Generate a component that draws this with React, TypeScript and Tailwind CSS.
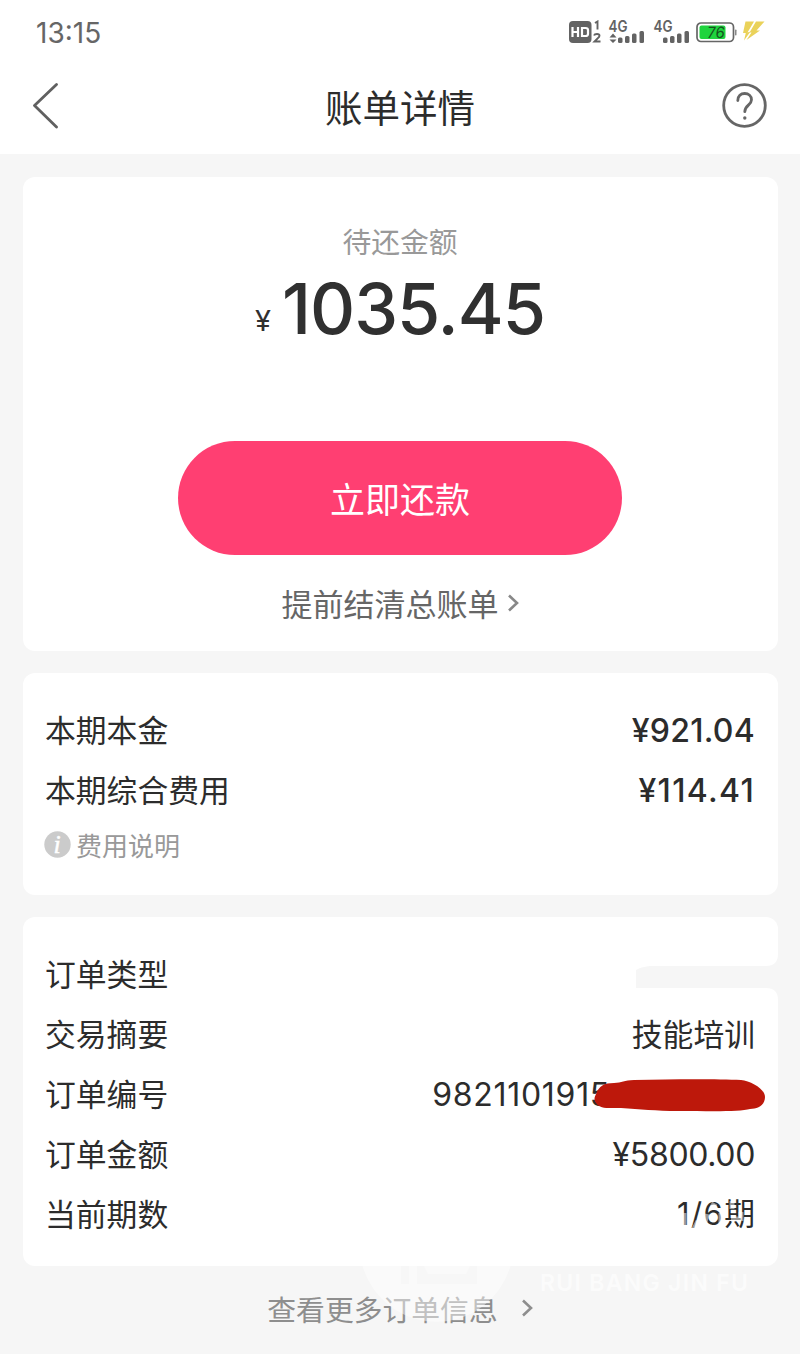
import type { ReactNode } from "react";

interface RowProps {
  label: string;
  children?: ReactNode;
}

function Row({ label, children }: RowProps) {
  return (
    <div className="flex h-[60px] items-center justify-between whitespace-nowrap text-[30.800px] leading-[60px] text-[#2c2c2c]">
      <span className="-mt-[3px]">{label}</span>
      {children}
    </div>
  );
}

function Signal({ arrows }: { arrows?: boolean }) {
  return (
    <svg className="-mt-2 h-8 w-9 shrink-0 overflow-visible" viewBox="0 -8 36 32" fill="#636363">
      <text x="-.5" y="11.500" fontSize="15.500" fontWeight="600" textLength="19" lengthAdjust="spacingAndGlyphs" className="font-['Inter',sans-serif]">
        4G
      </text>
      {arrows && <path d="M.5 17.500l3.500-4 3.500 4zM.5 19.500h7l-3.500 3.500z" />}
      <rect x="9" y="17.500" width="4.500" height="5.500" rx="1.500" />
      <rect x="16" y="16" width="4.500" height="7" rx="1.500" />
      <rect x="23" y="13.500" width="4.500" height="9.500" rx="1.500" />
      <rect x="30.500" y="11" width="4.500" height="12" rx="1.500" />
    </svg>
  );
}

function StatusBar() {
  return (
    <div className="flex h-16 items-center pl-[36px] pr-[35px]">
      <span className="pt-px font-['Inter',sans-serif] text-[28px] leading-8 text-[#666]">13:15</span>
      <div className="ml-auto flex items-center">
        <svg className="mr-[7px] h-6 w-[33px]" viewBox="0 0 33 24" fill="#636363">
          <rect x="0" y="1" width="22.500" height="22" rx="4" />
          <path d="M3.500 7v10M9 7v10M3.500 12H9M13 8v8h3.500q2.500 0 2.500-2v-4q0-2-2.500-2z" fill="none" stroke="#fff" strokeWidth="2.200" />
          <path d="M26 3L28.500 1.500v8M25 15.500q.5-1.500 3-1.500 2.500 0 2.500 1.800 0 1.200-2 2.700l-3 3h6" fill="none" stroke="#636363" strokeWidth="1.900" />
        </svg>
        <Signal arrows />
        <div className="w-[9px]" />
        <Signal />
        <svg className="ml-[6px] h-6 w-[42px]" viewBox="0 0 42 24">
          <rect x="1" y="3" width="36.500" height="18.500" rx="4" fill="#fff" stroke="#666" strokeWidth="1.700" />
          <rect x="3.500" y="5.500" width="26" height="13.500" rx="2" fill="#1fd43e" />
          <rect x="39" y="9.500" width="1.500" height="6" rx=".7" fill="#888" />
          <text x="10.500" y="18" fontSize="15.500" textLength="17.500" lengthAdjust="spacingAndGlyphs" transform="translate(2.500) skewX(-7)" fill="#17521f" className="font-['Inter',sans-serif]">
            76
          </text>
        </svg>
        <svg className="ml-[4px] h-6 w-[23px]" viewBox="0 0 23 24" fill="#ead25a">
          <path d="M3.500 1.500H12L5.500 12.500 8.500 11.500 2 20.500 3.800 13H1z" />
          <path d="M14 1.500H22.500L14.500 10.500H18L4.500 20 9.500 12.500H7.500z" />
        </svg>
      </div>
    </div>
  );
}

function Chevron({ className }: { className: string }) {
  return (
    <svg className={className} viewBox="0 0 12 20" fill="none" stroke="currentColor" strokeWidth="2.600">
      <path d="M2 2.500l8 7.500-8 7.500" />
    </svg>
  );
}

function Watermark() {
  return (
    <svg className="pointer-events-none absolute left-[350px] top-[1190px] h-[150px] w-[430px]" viewBox="350 1190 430 150">
      <path d="M362.500 1266h148a77 77 0 0 1-148 0z" fill="#fff" fillOpacity=".45" />
      <path d="M401 1266h8v18h-8zM417 1266h60v18h-60z" fill="#f6f6f6" fillOpacity=".8" />
      <path d="M424 1266h46l-4 8h-38z" fill="#fafafa" />
      <text x="540" y="1290.500" fontSize="23" fontWeight="600" textLength="208" fill="#fff" fillOpacity=".6" className="font-['Inter',sans-serif]">
        RUI BANG JIN FU
      </text>
      <path d="M684 1213v14M694 1229l4-8M705 1222l2-8M711 1204l5 3M721 1213v10M732 1201v8M741 1212v9M731 1219h9" stroke="#fff" strokeOpacity=".5" strokeWidth="5" fill="none" />
    </svg>
  );
}

export default function App() {
  return (
    <div className="relative h-[1354px] w-[800px] overflow-hidden bg-[#f6f6f6] font-['Noto_Sans_CJK_SC',sans-serif]">
      <header className="h-[154px] bg-white">
        <StatusBar />
        <div className="flex h-[84px] items-center justify-between pl-[31px] pr-[33px]">
          <svg className="h-[46px] w-[46px]" viewBox="0 0 46 46" fill="none" stroke="#606060" strokeWidth="2.800" strokeLinecap="round" strokeLinejoin="round">
            <path d="M25.500 1.500L3.500 22.500l22 21.500" />
          </svg>
          <h1 className="pl-[2px] text-[37.500px] leading-[84px] text-[#2c2c2c]">账单详情</h1>
          <svg className="h-[46px] w-[46px]" viewBox="0 0 46 46" fill="none" stroke="#666" strokeWidth="2.800" strokeLinecap="round">
            <circle cx="23.500" cy="22.500" r="20.800" />
            <path d="M16.800 17.500c0-4.500 3-7 6.900-7s6.800 2.500 6.800 6.200c0 5.500-6.700 5.500-6.700 12" />
            <circle cx="23.800" cy="35" r="1.700" fill="#666" stroke="none" />
          </svg>
        </div>
      </header>

      <main className="flex flex-col gap-[22px] px-[22.500px] pt-[23px]">
        {/* Amount due */}
        <section className="flex h-[474px] flex-col items-center rounded-xl bg-white pt-[43px]">
          <p className="text-[28.800px] leading-[42px] text-[#999]">待还金额</p>
          <div className="mt-[2px] flex h-[90px] items-baseline text-[#303030]">
            <span className="relative -top-[3px] mr-[11px] font-['Inter',sans-serif] text-[29px]">¥</span>
            <span className="font-['Inter',sans-serif] text-[70px] font-medium leading-[90px] tracking-[-1px]">1035.45</span>
          </div>
          <button className="mt-[87px] h-[114px] w-[444px] rounded-full bg-[#ff3f72] text-[35px] leading-[114px] text-white">立即还款</button>
          <div className="mt-[29px] flex items-center text-[31px] leading-[42px] text-[#666]">
            <span className="-mt-[2px]">提前结清总账单</span>
            <Chevron className="-mt-[2px] ml-[8px] h-5 w-3 text-[#888]" />
          </div>
        </section>

        {/* Current instalment */}
        <section className="h-[222px] rounded-xl bg-white px-[22.500px] pt-[27px]">
          <Row label="本期本金">
            <span className="pt-px font-['Inter',sans-serif] text-[32px] font-medium tracking-[0.250px]">¥921.04</span>
          </Row>
          <Row label="本期综合费用">
            <span className="pt-px font-['Inter',sans-serif] text-[32px] font-medium tracking-[1.300px]">¥114.41</span>
          </Row>
          <div className="flex h-[50px] items-center gap-[5px] text-[26px] leading-[50px] text-[#999]">
            <svg className="-ml-px -mt-[2px] h-[27px] w-[27px]" viewBox="0 0 27 27">
              <circle cx="13.500" cy="13.500" r="13.200" fill="#cbcbcb" />
              <text x="9.500" y="21.500" fontSize="26" fontStyle="italic" fill="#fff" stroke="#fff" strokeWidth=".5" className="font-['Liberation_Serif',serif]">
                i
              </text>
            </svg>
            <span className="-mt-px">费用说明</span>
          </div>
        </section>

        {/* Order */}
        <section className="relative h-[349px] rounded-xl bg-white px-[22.500px] pt-[27px]">
          <Row label="订单类型" />
          <Row label="交易摘要">
            <span className="-mt-[3px]">技能培训</span>
          </Row>
          <Row label="订单编号">
            <span className="mr-[145px] pt-px font-['Inter',sans-serif] text-[32px] tracking-[0.700px]">9821101915</span>
          </Row>
          <Row label="订单金额">
            <span className="pt-px font-['Inter',sans-serif] text-[32px] tracking-[-0.350px]">¥5800.00</span>
          </Row>
          <Row label="当前期数">
            <span className="font-['Inter','Noto_Sans_CJK_SC',sans-serif]">
              <span className="tracking-[1.500px]">1/6</span>期
            </span>
          </Row>
          <svg className="pointer-events-none absolute right-0 top-[36px] h-[48px] w-[144px]" viewBox="0 0 144 48" fill="#f6f6f6">
            <path d="M2 17q4-3 14-4h116q12 0 12-12v46q0-12-12-12H2z" />
          </svg>
          {/* Redaction stroke over the order number */}
          <svg className="pointer-events-none absolute right-[11px] top-[160px] h-[36px] w-[174px]" viewBox="0 0 174 36" fill="#bd180b">
            <path d="M3 17C6 9 11 6 21 6c8 0 10-3 20-3 42-1 84-1 107 0 10 1 24 9 24 17 0 8-7 12-15 12-10 3-40 2-72 2-22 0-38-2-57-3-14 0-21 1-25-5-2-3-2-5 0-9z" />
          </svg>
        </section>
      </main>

      <div className="flex h-[86px] items-center justify-center text-[28.800px] leading-[86px] text-[#8e8e8e]">
        查看更多订单信息
        <Chevron className="-mt-[2px] ml-[23px] h-5 w-3" />
      </div>

      <Watermark />
    </div>
  );
}
